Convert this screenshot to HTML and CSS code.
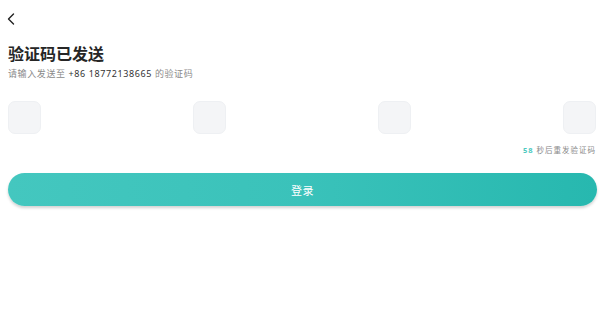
FILE: index.html
```html
<!DOCTYPE html>
<html lang="zh-CN">
<head>
<meta charset="utf-8">
<title>验证码已发送</title>
<link rel="stylesheet" href="styles.css">
</head>
<body>
<div class="page">
  <div class="nav">
    <svg class="back" width="12" height="12" viewBox="0 0 12 12" aria-hidden="true">
      <path d="M8.5 1 L3.5 6 L8.5 11" fill="none" stroke="#222" stroke-width="1.4" stroke-linecap="round" stroke-linejoin="round"/>
    </svg>
  </div>
  <h1 class="title">验证码已发送</h1>
  <p class="subtitle">请输入发送至 <span class="phone">+86 18772138665</span> 的验证码</p>
  <div class="codes">
    <div class="code-box"></div>
    <div class="code-box"></div>
    <div class="code-box"></div>
    <div class="code-box"></div>
  </div>
  <p class="hint"><span class="count">58</span> 秒后重发验证码</p>
  <button class="btn">登录</button>
</div>
</body>
</html>
```
FILE: styles.css
```css
* { box-sizing: border-box; }
html, body { margin: 0; padding: 0; background: #fff; }
body {
  font-family: "Noto Sans", "Noto Sans CJK SC", sans-serif;
  color: #222;
  width: 600px;
  height: 318px;
  overflow: hidden;
}
.page {
  padding: 0 3px 0 8px;
  display: flex;
  flex-direction: column;
}
.nav {
  height: 38px;
  display: flex;
  align-items: center;
}
.back { margin-left: -3px; display: block; }
.title {
  margin: 6px 0 0;
  font-size: 16px;
  line-height: 20px;
  font-weight: 700;
  color: #262626;
}
.subtitle {
  margin: 4px 0 0;
  font-size: 9px;
  line-height: 12px;
  color: #8a8a8a;
  letter-spacing: 0.6px;
}
.phone { color: #333; letter-spacing: 0.6px; }
.codes {
  margin-top: 21px;
  padding-right: 1px;
  display: flex;
  justify-content: space-between;
}
.code-box {
  width: 33px;
  height: 33px;
  border-radius: 7px;
  background: #f4f5f7;
  border: 1px solid #eef0f3;
}
.hint {
  margin: 11px 0 0;
  align-self: flex-end;
  padding-right: 1px;
  font-size: 7.5px;
  line-height: 10px;
  letter-spacing: 1px;
  color: #8a8a8a;
}
.count { color: #4ec9c0; font-weight: 700; }
.btn {
  margin-top: 18px;
  height: 33px;
  width: 100%;
  border: none;
  border-radius: 17px;
  background: linear-gradient(90deg, #44c7bf 0%, #3ac2ba 50%, #27b8af 100%);
  box-shadow: 0 2px 3px rgba(0, 0, 0, 0.18);
  color: #fff;
  font-family: "Noto Sans", "Noto Sans CJK SC", sans-serif;
  font-size: 11px;
  font-weight: 400;
  letter-spacing: 0.5px;
  padding: 0;
}
```
